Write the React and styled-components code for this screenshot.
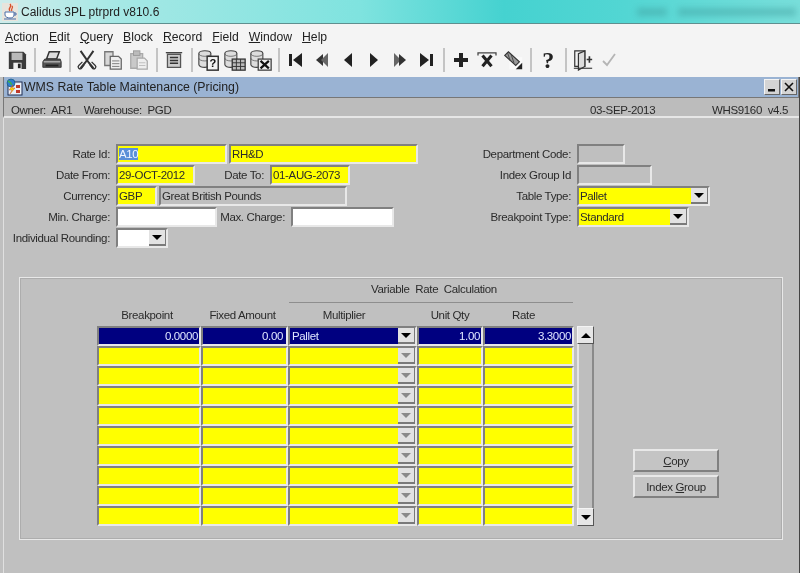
import React from "react";
import styled, {createGlobalStyle} from "styled-components";

const GlobalStyle = createGlobalStyle`
  html, body {
    margin: 0;
    padding: 0;
    background: #c0c0c0;
  }
  * {
    box-sizing: border-box;
  }
`;

const Save = () => (
  <svg width="20" height="22" viewBox="0 0 22 24">
    <path d="M2 3h16l3 3v16H2z" fill="#3a3a3a"/>
    <rect x="5" y="4" width="12" height="8" fill="#b9b9b9"/>
    <rect x="7" y="15" width="9" height="7" fill="#eee"/>
    <rect x="12" y="16" width="3" height="5" fill="#222"/>
  </svg>
);
const Printer = () => (
  <svg width="22" height="22" viewBox="0 0 24 24">
    <path d="M9 3h11l-3 8H6z" fill="#ddd" stroke="#333" strokeWidth="1.6"/>
    <path d="M4 11h17l1 3v6H2v-6z" fill="#555" stroke="#333"/>
    <path d="M3 14h18" stroke="#ccc" strokeWidth="1.2"/>
    <path d="M5 18h14" stroke="#222" strokeWidth="2"/>
  </svg>
);
const Scissors = () => (
  <svg width="22" height="22" viewBox="0 0 24 24" fill="none" stroke="#333">
    <path d="M5 2l9 13 5 6M19 2l-9 13-5 6" strokeWidth="2.2"/>
    <path d="M17 14l4 4a2 2 0 01-3 3l-3-4M7 14l-4 4a2 2 0 003 3l3-4" strokeWidth="1.400"/>
  </svg>
);
const Pages = () => (
  <svg width="22" height="22" viewBox="0 0 24 24">
    <path d="M3 3h9v15H3z" fill="#d8d8d8" stroke="#777" strokeWidth="1.4"/>
    <path d="M9 8h9l3 3v11H9z" fill="#eee" stroke="#666" strokeWidth="1.4"/>
    <path d="M11 13h8M11 16h8M11 19h8" stroke="#777"/>
  </svg>
);
const Clipboard = () => (
  <svg width="22" height="22" viewBox="0 0 24 24">
    <path d="M3 5h13v16H3z" fill="#c9c9c9" stroke="#aaa" strokeWidth="1.4"/>
    <rect x="6" y="2" width="7" height="5" fill="#bbb" stroke="#999"/>
    <path d="M10 10h8l3 3v9H10z" fill="#eee" stroke="#aaa" strokeWidth="1.4"/>
    <path d="M12 15h7M12 18h7" stroke="#bbb"/>
  </svg>
);
const Block = () => (
  <svg width="18" height="20" viewBox="0 0 22 24">
    <path d="M1 3h20" stroke="#444" strokeWidth="1.6"/>
    <path d="M3 5h16v16H3z" fill="#ccc" stroke="#555" strokeWidth="1.6"/>
    <path d="M6 9h10M6 12.500h10M6 16h10" stroke="#333" strokeWidth="1.8"/>
  </svg>
);
const Cylinder = () => (
  <>
    <path d="M2 6c0-4 13-4 13 0v12c0 4-13 4-13 0z" fill="#ddd" stroke="#444" strokeWidth="1.2"/>
    <path d="M2 6c0 4 13 4 13 0M2 11c0 4 13 4 13 0" fill="none" stroke="#555" strokeWidth=".8"/>
  </>
);
const DbQuery = () => (
  <svg width="24" height="24" viewBox="0 0 26 26">
    <Cylinder/>
    <rect x="11" y="9" width="12" height="15" fill="#f4f4f4" stroke="#333" strokeWidth="1.6"/>
    <text x="17" y="21" textAnchor="middle" fontFamily="Liberation Sans" fontWeight="700" fontSize="12" fill="#111">?</text>
  </svg>
);
const DbTable = () => (
  <svg width="24" height="24" viewBox="0 0 26 26">
    <Cylinder/>
    <rect x="10" y="12" width="14" height="12" fill="#bbb" stroke="#333" strokeWidth="1.4"/>
    <path d="M10 16h14M10 20h14M14.500 12v12M19 12v12" stroke="#333"/>
  </svg>
);
const DbDelete = () => (
  <svg width="24" height="24" viewBox="0 0 26 26">
    <Cylinder/>
    <rect x="10" y="12" width="14" height="12" fill="#eee" stroke="#444" strokeWidth="1.4"/>
    <path d="M12.500 14l9 8M21.500 14l-9 8" stroke="#111" strokeWidth="2.4"/>
  </svg>
);
const First = () => (
  <svg width="16" height="18" viewBox="0 0 16 18">
    <rect x="1" y="3" width="3" height="12" fill="#222"/>
    <path d="M14 2v14L5 9z" fill="#222"/>
  </svg>
);
const PrevSet = () => (
  <svg width="16" height="18" viewBox="0 0 16 18">
    <path d="M9 3v12L2 9z" fill="#333"/>
    <path d="M14 2v14L7 9z" fill="#666"/>
  </svg>
);
const Prev = () => (
  <svg width="16" height="18" viewBox="0 0 16 18">
    <path d="M12 2v14L4 9z" fill="#222"/>
  </svg>
);
const Next = () => (
  <svg width="16" height="18" viewBox="0 0 16 18">
    <path d="M4 2v14l8-7z" fill="#222"/>
  </svg>
);
const NextSet = () => (
  <svg width="16" height="18" viewBox="0 0 16 18">
    <path d="M2 2v14l7-7z" fill="#666"/>
    <path d="M7 3v12l7-6z" fill="#333"/>
  </svg>
);
const Last = () => (
  <svg width="16" height="18" viewBox="0 0 16 18">
    <path d="M2 2v14l9-7z" fill="#222"/>
    <rect x="12" y="3" width="3" height="12" fill="#222"/>
  </svg>
);
const Plus = () => (
  <svg width="18" height="18" viewBox="0 0 18 18">
    <path d="M9 2v14M2 9h14" stroke="#222" strokeWidth="4"/>
  </svg>
);
const ClearRecord = () => (
  <svg width="20" height="18" viewBox="0 0 22 20">
    <path d="M1 5V2h20v3" fill="none" stroke="#444" strokeWidth="1.4"/>
    <path d="M6 5l10 12M16 5L6 17" stroke="#222" strokeWidth="3.400"/>
  </svg>
);
const Eraser = () => (
  <svg width="22" height="22" viewBox="0 0 24 24">
    <rect x="8" y="9" width="14" height="13" fill="#fafafa"/>
    <path d="M3 7l4-4 12 11-4 4z" fill="#999" stroke="#333" strokeWidth="1.2"/>
    <path d="M6 4l3 9M10 6l3 9" stroke="#444"/>
    <path d="M22 15v7h-7z" fill="#222"/>
  </svg>
);
const Door = () => (
  <svg width="22" height="22" viewBox="0 0 24 24" fill="none" stroke="#333" strokeWidth="1.3">
    <path d="M3 2h11v17H3z" fill="#f2f2f2"/>
    <path d="M7 5v18l7-4V2z" fill="#ddd"/>
    <path d="M2 21h20" strokeWidth="1.200"/>
    <path d="M19 8v7M16 11.500h6" strokeWidth="1.800"/>
  </svg>
);
const Check = () => (
  <svg width="16" height="16" viewBox="0 0 16 16">
    <path d="M2 9l4 4 8-11" fill="none" stroke="#b5b5b5" strokeWidth="1.800"/>
  </svg>
);
const JavaCup = () => (
  <svg width="16" height="18" viewBox="0 0 16 18">
    <rect width="16" height="18" fill="#e8e4dc"/>
    <path d="M8 1c3 3-3 4 0 7M10 3c2 2-2 3 0 5" fill="none" stroke="#d8502a" strokeWidth="1.300"/>
    <path d="M3 9h9v3c0 2-2 3-4 3s-5-1-5-3z" fill="#fff" stroke="#4b6ea8"/>
    <path d="M12 10h2v2h-2M2 16h12" fill="none" stroke="#4b6ea8"/>
  </svg>
);
const FormIcon = () => (
  <svg width="18" height="18" viewBox="0 0 18 18">
    <rect x="3" y="4" width="14" height="13" fill="#e9f0f8" stroke="#1c2c55"/>
    <circle cx="6" cy="5" r="4" fill="#2f7fd0" stroke="#14506f" strokeWidth=".6"/>
    <path d="M3 3c2 1 3 2 4 4" stroke="#3fb34f" fill="none" strokeWidth="1.400"/>
    <path d="M8 7L4 12h3l-2 4 5-6H7z" fill="#f5d90a" stroke="#c03020" strokeWidth=".4"/>
    <path d="M11 7h4v3h-4zM11 12h4v3h-4z" fill="#c0392b"/>
  </svg>
);

const TOOLS = [
  [Save], "sep", [Printer], "sep", [Scissors], [Pages], [Clipboard], "sep", [Block], "sep",
  [DbQuery], [DbTable], [DbDelete], "sep",
  [First], [PrevSet], [Prev], [Next], [NextSet], [Last], "sep",
  [Plus], [ClearRecord], [Eraser], "sep", ["?"], "sep", [Door], [Check],
];
const MENUS = ["Action", "Edit", "Query", "Block", "Record", "Field", "Window", "Help"];
const RATE_ROWS = Array.from({length: 10}, (_, i) => i);

const App = () => {
  return (
    <Screen>
      <GlobalStyle/>
      <TitleBar>
        <JavaCup/>
        <AppName>Calidus 3PL ptrprd v810.6</AppName>
        <Smudges aria-hidden="true"><Smudge $w={30}/><Smudge $w={118}/></Smudges>
      </TitleBar>
      <MenuBar>
        {MENUS.map(m => (
          <MenuItem key={m}><u>{m[0]}</u>{m.slice(1)}</MenuItem>
        ))}
      </MenuBar>
      <ToolBar>
        {TOOLS.map((t, i) => {
          if (t === "sep") return <ToolSep key={i}/>;
          const Icon = t[0];
          return <ToolButton key={i}>{Icon === "?" ? <Help>?</Help> : <Icon/>}</ToolButton>;
        })}
      </ToolBar>
      <Window>
        <WindowHead>
          <WindowTitle>
            <FormIcon/>
            <WindowName>WMS Rate Table Maintenance (Pricing)</WindowName>
            <WinButton>
              <svg width="10" height="10" viewBox="0 0 10 10"><rect x="1" y="7" width="7" height="2.500" fill="#111"/></svg>
            </WinButton>
            <WinButton>
              <svg width="10" height="10" viewBox="0 0 10 10"><path d="M1 1l8 8M9 1l-8 8" stroke="#111" strokeWidth="1.600"/></svg>
            </WinButton>
          </WindowTitle>
          <InfoBar>
            <InfoOwner>Owner:&nbsp; AR1 &nbsp;&nbsp; Warehouse:&nbsp; PGD</InfoOwner>
            <InfoDate>03-SEP-2013</InfoDate>
            <span>WHS9160&nbsp; v4.5</span>
          </InfoBar>
        </WindowHead>
        <Body>
          <Form>
            <FormLeft>
              <FormRow>
                <Label $w={114}>Rate Id:</Label>
                <Field $w={111} $bg="yellow"><Selected>A10</Selected></Field>
                <Field $w={189} $bg="yellow">RH&amp;D</Field>
              </FormRow>
              <FormRow>
                <Label $w={114}>Date From:</Label>
                <Field $w={79} $bg="yellow">29-OCT-2012</Field>
                <Label $w={71}>Date To:</Label>
                <Field $w={80} $bg="yellow">01-AUG-2073</Field>
              </FormRow>
              <FormRow>
                <Label $w={114}>Currency:</Label>
                <Field $w={41} $bg="yellow">GBP</Field>
                <Field $w={188}>Great British Pounds</Field>
              </FormRow>
              <FormRow>
                <Label $w={114}>Min. Charge:</Label>
                <Field $w={101} $bg="white"/>
                <Label $w={70}>Max. Charge:</Label>
                <Field $w={103} $bg="white"/>
              </FormRow>
              <FormRow>
                <Label $w={114}>Individual Rounding:</Label>
                <Select $w={52} $bg="white"/>
              </FormRow>
            </FormLeft>
            <FormRight>
              <FormRow>
                <Label $w={115}>Department Code:</Label>
                <Field $w={48}/>
              </FormRow>
              <FormRow>
                <Label $w={115}>Index Group Id</Label>
                <Field $w={75}/>
              </FormRow>
              <FormRow>
                <Label $w={115}>Table Type:</Label>
                <Select $w={133} $bg="yellow" value="Pallet"/>
              </FormRow>
              <FormRow>
                <Label $w={115}>Breakpoint Type:</Label>
                <Select $w={112} $bg="yellow" value="Standard"/>
              </FormRow>
            </FormRight>
          </Form>
          <Panel>
            <TableArea>
              <VariableHead>Variable&nbsp; Rate&nbsp; Calculation</VariableHead>
              <HeadRow>
                <BreakpointHead>Breakpoint</BreakpointHead>
                <BreakpointHead>Fixed Amount</BreakpointHead>
                <MultiplierHead>Multiplier</MultiplierHead>
                <span>Unit Qty</span>
                <RateHead>Rate</RateHead>
              </HeadRow>
              <Grid>
                <div>
                  {RATE_ROWS.map(i => (
                    <RateRow key={i}>
                      <Cell $active={i === 0} $right={1}>{i === 0 && "0.0000"}</Cell>
                      <Cell $active={i === 0} $right={3}>{i === 0 && "0.00"}</Cell>
                      <Cell $active={i === 0}>
                        <CellText>{i === 0 && "Pallet"}</CellText>
                        <DropButton><Arrow $off={i !== 0}/></DropButton>
                      </Cell>
                      <Cell $active={i === 0} $right={1}>{i === 0 && "1.00"}</Cell>
                      <Cell $active={i === 0} $right={1}>{i === 0 && "3.3000"}</Cell>
                    </RateRow>
                  ))}
                </div>
                <ScrollBar>
                  <ScrollButton><Arrow $up/></ScrollButton>
                  <ScrollTrack/>
                  <ScrollButton><Arrow/></ScrollButton>
                </ScrollBar>
              </Grid>
            </TableArea>
            <Actions>
              <Action><u>C</u>opy</Action>
              <Action>Index <u>G</u>roup</Action>
            </Actions>
          </Panel>
        </Body>
      </Window>
    </Screen>
  );
};

const Select = ({$w, $bg, value}) => (
  <SelectBox $w={$w}>
    <SelectValue $bg={$bg}>{value}</SelectValue>
    <DropButton><Arrow/></DropButton>
  </SelectBox>
);

const Screen = styled.div`
  width: 800px;
  height: 573px;
  overflow: hidden;
  display: flex;
  flex-direction: column;
  background: #f4f4f4;
  font-family: "Liberation Sans", Arial, sans-serif;
  font-size: 11.5px;
  letter-spacing: -0.35px;
  color: #2b2b2b;
  filter: blur(0.35px);
`;
const TitleBar = styled.div`
  height: 24px;
  flex: none;
  display: flex;
  align-items: center;
  gap: 3px;
  padding-left: 2px;
  background: linear-gradient(90deg, #cfeceb 0, #a5e8e5 15%, #7fe3df 45%, #45d2d0 63%, #52d6d3 78%, #78deda 100%);
  border-bottom: 1px solid #5f8f8f;
`;
const AppName = styled.span`
  font-size: 12px;
  letter-spacing: 0;
  color: #222;
`;
const Smudges = styled.div`
  margin-left: auto;
  display: flex;
  gap: 11px;
  padding-right: 4px;
`;
const Smudge = styled.span`
  width: ${p => p.$w}px;
  height: 8px;
  background: #3f9c9c;
  opacity: 0.45;
  filter: blur(3px);
`;
const MenuBar = styled.div`
  height: 22px;
  flex: none;
  display: flex;
  align-items: center;
  gap: 10px;
  padding: 3px 0 0 5px;
`;
const MenuItem = styled.span`
  font-size: 12.2px;
  letter-spacing: 0;
  color: #222;
`;
const ToolBar = styled.div`
  height: 31px;
  flex: none;
  display: flex;
  align-items: center;
  padding: 0 0 3px 4px;
`;
const ToolButton = styled.div`
  width: 26px;
  height: 26px;
  display: flex;
  align-items: center;
  justify-content: center;
`;
const ToolSep = styled.div`
  width: 2px;
  height: 24px;
  margin: 0 3.5px;
  background: #c4c4c4;
`;
const Help = styled.span`
  font: 700 24px "Liberation Serif", serif;
  color: #222;
`;
const Window = styled.div`
  flex: 1;
  display: flex;
  flex-direction: column;
  background: #c0c0c0;
  border-right: 1px solid #444;
`;
const WindowHead = styled.div`
  flex: none;
  padding-left: 3px;
`;
const WindowTitle = styled.div`
  height: 21px;
  display: flex;
  align-items: center;
  gap: 1px;
  padding: 0 1px;
  background: #9ab3d3;
  border-left: 1px solid #777;
  border-right: 1px solid #777;
  border-bottom: 1px solid #777;
`;
const WindowName = styled.span`
  flex: 1;
  font-size: 12.3px;
  letter-spacing: 0;
  color: #222;
`;
const WinButton = styled.div`
  width: 16px;
  height: 16px;
  display: flex;
  align-items: center;
  justify-content: center;
  background: #d4d4d4;
  border: 1px solid;
  border-color: #f4f4f4 #666 #666 #f4f4f4;
`;
const InfoBar = styled.div`
  height: 20px;
  display: flex;
  align-items: center;
  padding: 6px 8px 0 7px;
  background: #bcbcbc;
  border-left: 1px solid #777;
  border-bottom: 2px solid #e6e6e6;
`;
const InfoOwner = styled.span`
  width: 579px;
`;
const InfoDate = styled.span`
  width: 122px;
`;
const Body = styled.div`
  flex: 1;
  padding: 26px 16px 0 19px;
  background: linear-gradient(90deg, #c0c0c0 3px, #e0e0e0 3px, #e0e0e0 4px, #c0c0c0 4px);
`;
const Form = styled.div`
  display: flex;
  height: 133px;
`;
const FormLeft = styled.div`
  width: 460px;
  margin-left: -19px;
  display: flex;
  flex-direction: column;
  gap: 1px;
`;
const FormRight = styled.div`
  display: flex;
  flex-direction: column;
  gap: 1px;
`;
const FormRow = styled.div`
  height: 20px;
  display: flex;
  align-items: stretch;
  gap: 2px;
`;
const Label = styled.label`
  width: ${p => p.$w}px;
  padding-right: 4px;
  display: flex;
  align-items: center;
  justify-content: flex-end;
  white-space: nowrap;
`;
const bgColor = bg => (bg === "yellow" ? "#ffff00" : bg === "white" ? "#ffffff" : "#bfbfbf");
const Field = styled.div`
  width: ${p => p.$w}px;
  display: flex;
  align-items: center;
  padding-left: 1px;
  white-space: nowrap;
  background: ${p => bgColor(p.$bg)};
  border: 2px solid;
  border-color: #808080 #e8e8e8 #e8e8e8 #808080;
`;
const Selected = styled.span`
  background: #5b8fd8;
  color: #f2f6ff;
`;
const SelectBox = styled.div`
  width: ${p => p.$w}px;
  display: flex;
  border: 2px solid;
  border-color: #808080 #e8e8e8 #e8e8e8 #808080;
`;
const SelectValue = styled.div`
  flex: 1;
  display: flex;
  align-items: center;
  padding-left: 1px;
  background: ${p => bgColor(p.$bg)};
`;
const DropButton = styled.div`
  width: 17px;
  flex: none;
  align-self: stretch;
  display: flex;
  align-items: center;
  justify-content: center;
  background: #e2e2e2;
  border-right: 1px solid #7a7a7a;
  border-bottom: 2px solid #7a7a7a;
`;
const Arrow = styled.span`
  width: 0;
  height: 0;
  border-left: 5px solid transparent;
  border-right: 5px solid transparent;
  border-${p => (p.$up ? "bottom" : "top")}: 5px solid ${p => (p.$off ? "#8a8a8a" : "#000")};
`;
const Panel = styled.div`
  height: 263px;
  display: flex;
  padding: 4px 0 0 77px;
  border: 1px solid #e8e8e8;
  outline: 1px solid #adadad;
  outline-offset: -2px;
`;
const TableArea = styled.div`
  width: 497px;
  display: flex;
  flex-direction: column;
`;
const VariableHead = styled.div`
  width: 284px;
  height: 21px;
  margin-left: 192px;
  padding-left: 6px;
  text-align: center;
  line-height: 15px;
  border-bottom: 1px solid #8e8e8e;
`;
const HeadRow = styled.div`
  height: 23px;
  display: grid;
  grid-template-columns: 104px 87px 129px 66px 91px;
  align-items: center;
  text-align: center;
`;
const BreakpointHead = styled.span`
  padding-right: 4px;
`;
const MultiplierHead = styled.span`
  padding-right: 17px;
`;
const RateHead = styled.span`
  padding-right: 10px;
`;
const Grid = styled.div`
  display: flex;
  gap: 3px;
`;
const RateRow = styled.div`
  height: 20px;
  display: grid;
  grid-template-columns: 104px 87px 129px 66px 91px;
`;
const Cell = styled.div`
  display: flex;
  align-items: center;
  justify-content: ${p => (p.$right ? "flex-end" : "flex-start")};
  padding-right: ${p => p.$right || 0}px;
  color: ${p => (p.$active ? "#dfe6ff" : "#222")};
  background: ${p => (p.$active ? "#000080" : "#ffff00")};
  border: 2px solid;
  border-color: #808080 #e8e8e8 #e8e8e8 #808080;
`;
const CellText = styled.span`
  flex: 1;
  padding-left: 2px;
`;
const ScrollBar = styled.div`
  width: 17px;
  display: flex;
  flex-direction: column;
`;
const ScrollButton = styled.div`
  height: 18px;
  flex: none;
  display: flex;
  align-items: center;
  justify-content: center;
  background: #e6e6e6;
  border: 1px solid;
  border-color: #f4f4f4 #555 #555 #f4f4f4;
`;
const ScrollTrack = styled.div`
  flex: 1;
  background: #bebebe;
  border-left: 2px solid #e4e4e4;
  border-right: 2px solid #8a8a8a;
`;
const Actions = styled.div`
  margin-left: 39px;
  padding-bottom: 41px;
  display: flex;
  flex-direction: column;
  justify-content: flex-end;
  gap: 3px;
`;
const Action = styled.button`
  width: 86px;
  height: 23px;
  padding: 0;
  font-family: inherit;
  font-size: 11.5px;
  letter-spacing: -0.35px;
  color: #2b2b2b;
  background: #c4c4c4;
  border: 2px solid;
  border-color: #e8e8e8 #808080 #808080 #e8e8e8;
`;

export default App;
